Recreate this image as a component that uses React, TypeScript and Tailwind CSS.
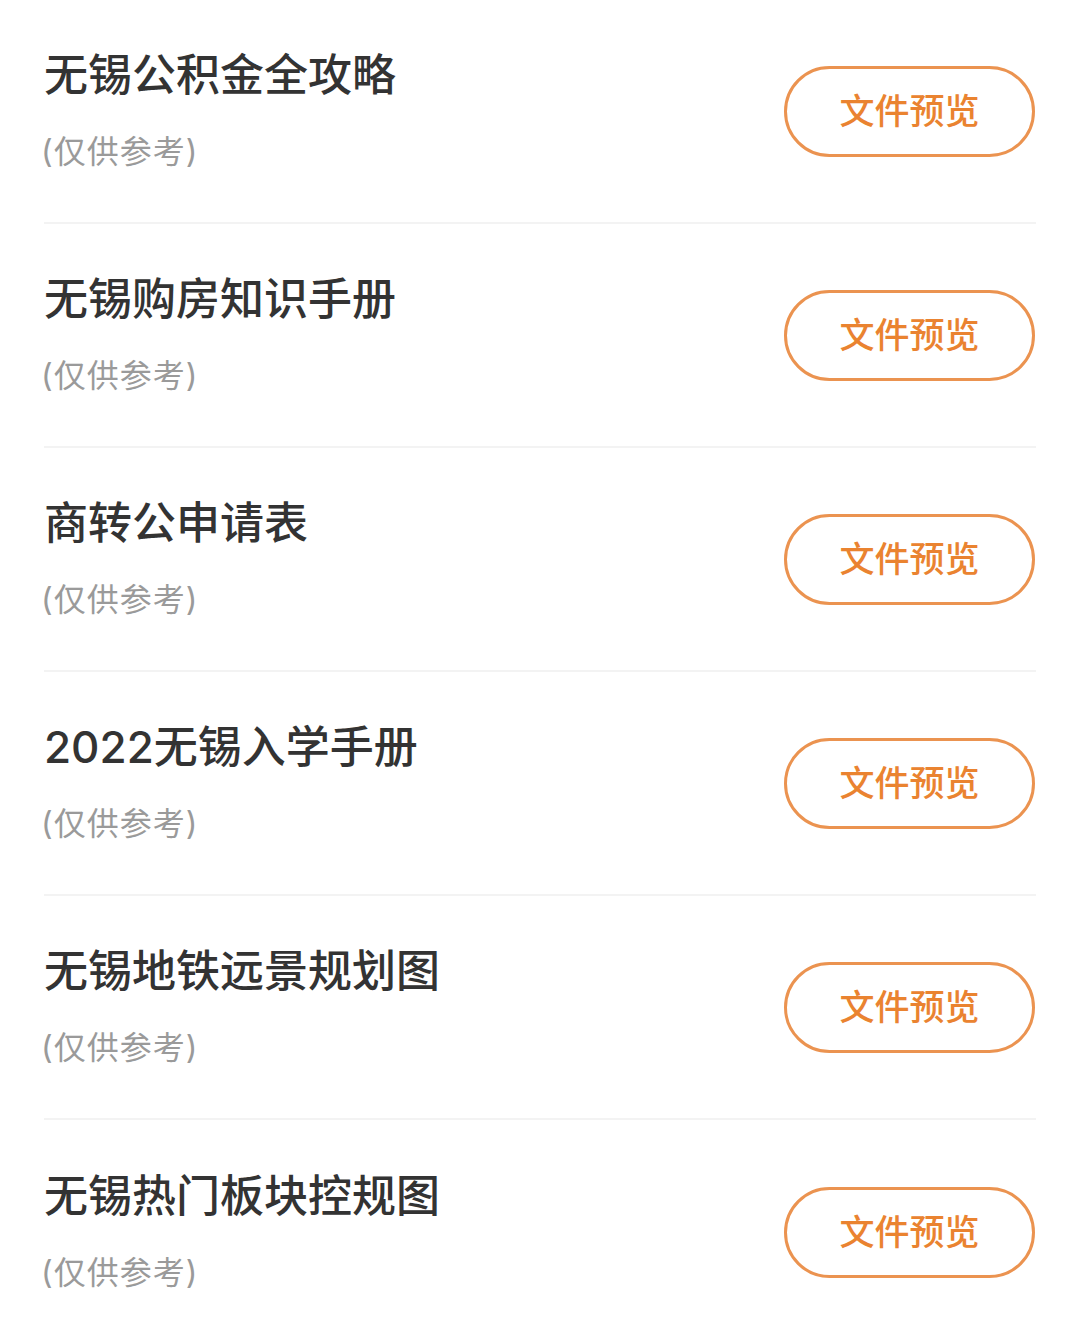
import React from "react";

const items = [
  "无锡公积金全攻略",
  "无锡购房知识手册",
  "商转公申请表",
  "2022无锡入学手册",
  "无锡地铁远景规划图",
  "无锡热门板块控规图",
];

export default function App() {
  return (
    <div
      className="w-[1080px] h-[1342px] bg-white overflow-hidden px-[44px]"
      style={{ fontFamily: 'Inter, "Noto Sans CJK SC", "Noto Sans", sans-serif' }}
    >
      {items.map((t, i) => (
        <div
          key={i}
          className={`flex items-center justify-between h-[224px] ${i < items.length - 1 ? "border-b-2 border-[#f3f3f3]" : ""}`}
        >
          <div className="flex flex-col">
            <div className="text-[44px] leading-[52px] font-medium text-[#333333]">{t}</div>
            <div className="mt-[29px] text-[32px] leading-[44px] text-[#9a9a9a] -ml-[3px] tracking-[1px]">(仅供参考)</div>
          </div>
          <button className="w-[251px] h-[91px] mr-px rounded-full border-[3px] border-[#eb9350] text-[#ea8330] text-[35px] font-medium flex items-center justify-center">
            文件预览
          </button>
        </div>
      ))}
    </div>
  );
}
